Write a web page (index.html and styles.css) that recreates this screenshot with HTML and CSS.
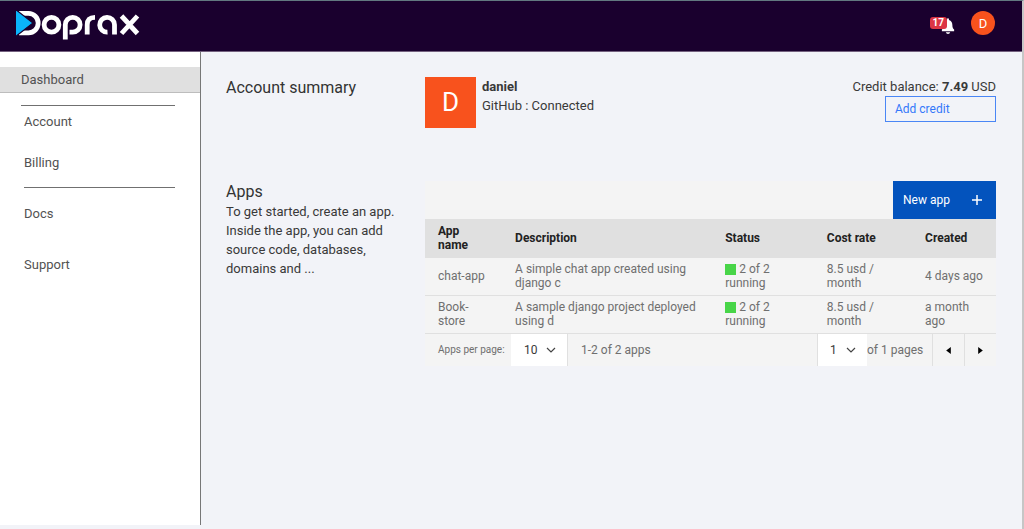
FILE: index.html
```html
<!DOCTYPE html>
<html lang="en">
<head>
<meta charset="utf-8">
<meta name="viewport" content="width=device-width, initial-scale=1">
<title>Doprax Dashboard</title>
<link rel="stylesheet" href="styles.css">
</head>
<body>
<header class="topbar">
  <a class="brand" href="#" aria-label="Doprax">
    <svg class="logo" viewBox="0 0 126 32" width="126" height="32" fill="none" stroke="#fff" stroke-width="4.800" aria-hidden="true">
      <path d="M3 2.400H12.500A9.700 9.700 0 0 1 12.500 21.800H3" />
      <path d="M-1 -2L17 12L-1 26Z" fill="#0ab4fb" stroke="#1a002e" stroke-width="1.200" />
      <circle cx="35.500" cy="13.800" r="7.400" />
      <path d="M49.300 28.500V13.800A7.400 7.400 0 1 1 56.700 21.200H53.500" />
      <path d="M71.200 23.500V14Q71.200 6.400 79 6.400" />
      <path d="M91.500 21.200A7.400 7.400 0 1 1 98.500 13.800V23.500" />
      <path d="M105.500 5L112 12M115 15.500L121.500 22.500M121.500 5L105.500 22.500" />
    </svg>
  </a>
  <div class="top-actions">
    <button class="bell" type="button" aria-label="17 notifications">
      <svg viewBox="0 0 16 18" width="14" height="16" fill="#fff" aria-hidden="true"><path d="M8 0C9 0 9.400 1 9 2C12 3 13 5 13 8C13 11 14 12 15 13V15H1V13C2 12 3 11 3 8C3 5 4 3 7 2C6.600 1 7 0 8 0ZM5.500 16H10.500Q10 18 8 18T5.500 16Z"/></svg>
      <span class="badge">17</span>
    </button>
    <button class="avatar" type="button" aria-label="Account menu">D</button>
  </div>
</header>
<div class="layout">
  <nav class="sidebar">
    <a class="nav-link active" href="#">Dashboard</a>
    <hr class="rule">
    <a class="nav-link" href="#">Account</a>
    <a class="nav-link" href="#">Billing</a>
    <hr class="rule inset">
    <a class="nav-link roomy" href="#">Docs</a>
    <a class="nav-link roomy" href="#">Support</a>
  </nav>
  <main class="content">
    <section class="summary">
      <h1 class="title">Account summary</h1>
      <div class="profile">
        <div class="tile">D</div>
        <div class="who"><strong>daniel</strong><br>GitHub : Connected</div>
        <div class="credit">
          <span>Credit balance: <strong>7.49</strong> USD</span>
          <button class="add-credit" type="button">Add credit</button>
        </div>
      </div>
    </section>
    <section class="apps">
      <div>
        <h2 class="title">Apps</h2>
        <p class="intro">To get started, create an app. Inside the app, you can add source code, databases, domains and ...</p>
      </div>
      <div class="panel">
        <div class="toolbar">
          <button class="new-app" type="button">New app
            <svg viewBox="0 0 12 12" width="12" height="12" stroke="#fff" stroke-width="1.500" aria-hidden="true"><path d="M6 1V11M1 6H11"/></svg>
          </button>
        </div>
        <table class="table">
          <colgroup><col class="c-name"><col class="c-desc"><col class="c-status"><col class="c-cost"><col class="c-created"></colgroup>
          <thead><tr><th>App name</th><th>Description</th><th>Status</th><th>Cost rate</th><th>Created</th></tr></thead>
          <tbody>
            <tr><td>chat-app</td><td>A simple chat app created using django c</td><td><span class="dot"></span>2 of 2 running</td><td>8.5 usd / month</td><td>4 days ago</td></tr>
            <tr><td>Book-<wbr>store</td><td>A sample django project deployed using d</td><td><span class="dot"></span>2 of 2 running</td><td>8.5 usd / month</td><td>a month ago</td></tr>
          </tbody>
        </table>
        <div class="pager">
          <label class="per-page" for="per-page">Apps per page:</label>
          <div class="pick size">
            <select id="per-page"><option>10</option><option>20</option></select>
            <svg class="chevron" viewBox="0 0 10 6" width="10" height="6" fill="none" stroke="#444" stroke-width="1.200" aria-hidden="true"><path d="M1 1L5 5L9 1"/></svg>
          </div>
          <span class="range">1-2 of 2 apps</span>
          <div class="pick number">
            <select aria-label="Page number"><option>1</option></select>
            <svg class="chevron" viewBox="0 0 10 6" width="10" height="6" fill="none" stroke="#444" stroke-width="1.200" aria-hidden="true"><path d="M1 1L5 5L9 1"/></svg>
          </div>
          <span class="total">of 1 pages</span>
          <button class="step" type="button" aria-label="Previous page"><svg viewBox="0 0 4 6" width="5" height="7" aria-hidden="true"><path d="M4 0V6L0 3Z"/></svg></button>
          <button class="step" type="button" aria-label="Next page"><svg viewBox="0 0 4 6" width="5" height="7" aria-hidden="true"><path d="M0 0V6L4 3Z"/></svg></button>
        </div>
      </div>
    </section>
  </main>
</div>
</body>
</html>
```
FILE: styles.css
```css
* { box-sizing: border-box; }
body {
  margin: 0;
  min-height: 100vh;
  display: flex;
  flex-direction: column;
  background: #f2f3f8;
  border-top: 1px solid #627880;
  border-right: 2px solid #c6c6c6;
  color: #393939;
  font: 13px/19px Roboto, "Liberation Sans", sans-serif;
}
button, select { font: inherit; border: 0; border-radius: 0; margin: 0; }
.topbar {
  display: flex;
  justify-content: space-between;
  height: 51px;
  padding: 10px 27px 0 16px;
  background: #1a002e;
  border-bottom: 1px solid #74617f;
}
.logo { display: block; }
.top-actions { display: flex; align-items: flex-start; gap: 16px; }
.bell { position: relative; padding: 7px 0 0; background: none; line-height: 0; }
.badge {
  position: absolute;
  right: 8px;
  top: 6px;
  padding: 0 3px;
  border-radius: 3px;
  background: #dc3545;
  color: #fff;
  font-size: 10px;
  font-weight: 700;
  line-height: 12px;
}
.avatar {
  width: 24px;
  height: 24px;
  padding: 0;
  border-radius: 50%;
  background: #f8521d;
  color: #fff;
}
.layout { flex: 1; display: flex; }
.sidebar {
  flex: none;
  width: 201px;
  margin-bottom: 4px;
  padding-top: 15px;
  background: #fff;
  border-right: 1px solid #777;
}
.nav-link {
  display: block;
  padding: 11px 24px;
  color: #525252;
  text-decoration: none;
}
.nav-link.active { padding: 3px 21px; height: 26px; background: #e0e0e0; border-bottom: 1px solid #bdbdbd; }
.nav-link.roomy { padding: 16px 24px; }
.rule { height: 1px; margin: 12px 25px 0 21px; border: 0; background: #707070; }
.nav-link + .rule + .nav-link { padding-top: 6px; }
.rule.inset { margin: 4px 25px 0 24px; }
.nav-link + .rule.inset + .nav-link { padding-top: 16px; }
.content { flex: 1; padding: 25px 26px 0 25px; }
.summary, .apps { display: grid; grid-template-columns: 199px minmax(0, 1fr); }
.title { margin: 0; font-size: 16px; font-weight: 400; line-height: 21px; color: #333; }
.summary { min-height: 104px; }
.profile { display: flex; align-items: flex-start; gap: 6px; }
.tile {
  display: grid;
  place-items: center;
  width: 51px;
  height: 51px;
  background: #f8521d;
  color: #fff;
  font-size: 26px;
}
.credit { display: flex; flex-direction: column; align-items: flex-end; margin-left: auto; }
.add-credit {
  width: 111px;
  height: 26px;
  padding: 0 9px;
  border: 1px solid #4a86f5;
  background: none;
  color: #3478fa;
  font-size: 12px;
  text-align: left;
}
.intro { margin: 0; padding-right: 24px; }
.panel { background: #f4f4f4; color: #6f6f6f; font-size: 12px; line-height: 14px; }
.toolbar { display: flex; justify-content: flex-end; }
.new-app {
  display: flex;
  align-items: center;
  justify-content: space-between;
  width: 103px;
  height: 38px;
  padding: 0 13px 0 10px;
  background: #0353bd;
  color: #fff;
}
.table { width: 100%; border-collapse: collapse; table-layout: fixed; }
.c-name { width: 13.5%; }
.c-desc { width: 36.800%; }
.c-status { width: 17.800%; }
.c-cost { width: 17.200%; }
.table th, .table td { height: 38px; padding: 4px 12px 4px 13px; text-align: left; border-bottom: 1px solid #e0e0e0; }
.table th { background: #e0e0e0; color: #222; }
.dot { display: inline-block; width: 11px; height: 11px; margin-right: 3px; background: #48d548; vertical-align: -2px; }
.pager { display: flex; align-items: center; height: 32px; }
.per-page { width: 86px; padding-left: 13px; font-size: 10px; white-space: nowrap; }
.pick { position: relative; height: 32px; background: #fff; }
.pick select { appearance: none; width: 100%; height: 32px; padding: 0 13px; background: none; color: #393939; }
.size { width: 57px; border-right: 1px solid #e0e0e0; }
.number { width: 50px; margin-left: auto; border-left: 1px solid #e0e0e0; }
.number select { padding: 0 12px; }
.chevron { position: absolute; right: 11px; top: 13px; pointer-events: none; }
.range { padding-left: 13px; }
.total { width: 65px; white-space: nowrap; }
.step { width: 32px; height: 32px; padding: 0; border-left: 1px solid #e0e0e0; background: none; }
```
